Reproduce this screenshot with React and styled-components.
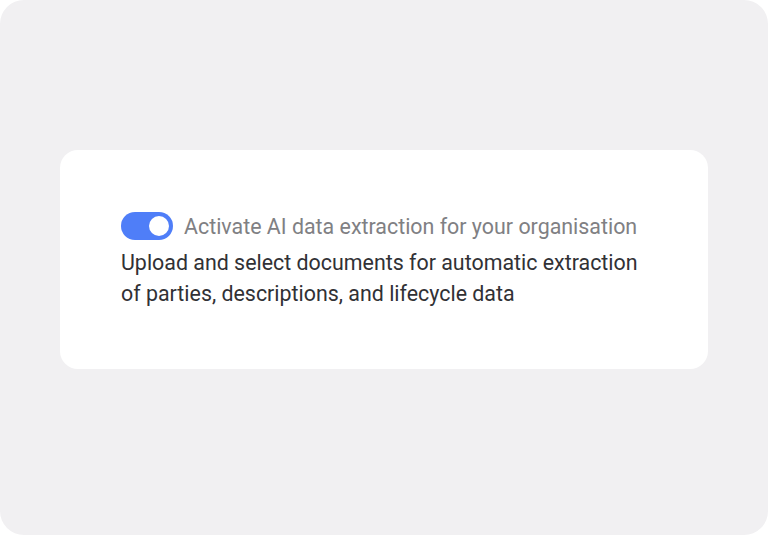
import React from "react";
import styled, { createGlobalStyle } from "styled-components";

const GlobalStyle = createGlobalStyle`
  html, body {
    margin: 0;
    padding: 0;
    background: #ffffff;
  }
  body {
    font-family: Roboto, "Noto Sans", sans-serif;
  }
`;

const App = () => {
  return (
    <>
      <GlobalStyle />
      <Page>
        <Card>
          <ToggleRow>
            <Switch $on aria-hidden="true">
              <Knob $on />
            </Switch>
            <Label>Activate AI data extraction for your organisation</Label>
          </ToggleRow>
          <Description>
            Upload and select documents for automatic extraction
            <br />
            of parties, descriptions, and lifecycle data
          </Description>
        </Card>
      </Page>
    </>
  );
};

const Page = styled.div`
  width: 768px;
  height: 535px;
  box-sizing: border-box;
  background: #f1f0f2;
  border-radius: 24px;
  padding: 150px 60px 166px;
  display: flex;
`;

const Card = styled.div`
  flex: 1;
  background: #ffffff;
  border-radius: 18px;
  padding: 60px 61px;
  display: flex;
  flex-direction: column;
`;

const ToggleRow = styled.div`
  display: flex;
  align-items: center;
  gap: 11px;
  height: 32px;
`;

const Switch = styled.div`
  width: 52px;
  height: 28px;
  border-radius: 14px;
  background: ${(p) => (p.$on ? "#4f7ef8" : "#c9c9cf")};
  display: flex;
  align-items: center;
  justify-content: ${(p) => (p.$on ? "flex-end" : "flex-start")};
  padding: 0 4px;
  box-sizing: border-box;
  flex-shrink: 0;
`;

const Knob = styled.div`
  width: 20px;
  height: 20px;
  border-radius: 50%;
  background: #ffffff;
`;

const Label = styled.span`
  font-size: 21.4px;
  color: #808083;
`;

const Description = styled.p`
  margin: 5px 0 0;
  font-size: 21.4px;
  line-height: 31px;
  color: #313135;
`;

export default App;
